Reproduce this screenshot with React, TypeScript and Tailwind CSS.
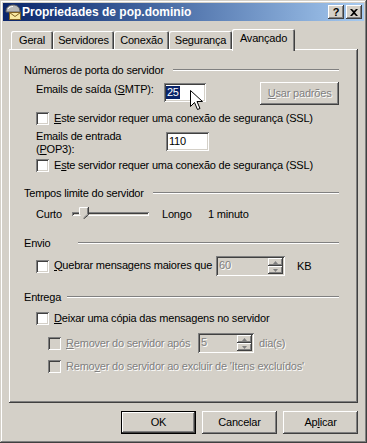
import React from 'react';

const raised =
  'shadow-[inset_-1px_-1px_0_#404040,inset_1px_1px_0_#ffffff,inset_-2px_-2px_0_#808080,inset_2px_2px_0_#d4d0c8]';
const sunken =
  'shadow-[inset_1px_1px_0_#808080,inset_-1px_-1px_0_#ffffff,inset_2px_2px_0_#404040,inset_-2px_-2px_0_#d4d0c8]';
const frame =
  'shadow-[inset_-1px_-1px_0_#404040,inset_1px_1px_0_#d4d0c8,inset_-2px_-2px_0_#808080,inset_2px_2px_0_#ffffff]';
const tabEdge = 'shadow-[inset_1px_1px_0_#ffffff,inset_-1px_0_0_#404040,inset_-2px_0_0_#808080]';
const grayed = 'text-[#808080] [text-shadow:1px_1px_0_#ffffff]';

function MailIcon() {
  return (
    <svg width="16" height="16" viewBox="0 0 16 16">
      <path d="M1 8 C1 3 4 1 8 1 C12 1 15 3 15 8 Z" fill="#b8b8b8" stroke="#606060" strokeWidth="1" />
      <path d="M3 5 C4 3 6 2.5 8 2.5" stroke="#ffffff" strokeWidth="1" fill="none" />
      <rect x="4.5" y="8.5" width="11" height="7" fill="#f8e8a0" stroke="#806020" />
      <path d="M4.5 8.5 L10 12.5 L15.5 8.5" fill="none" stroke="#806020" />
    </svg>
  );
}

function TitleBar() {
  return (
    <div className="h-[18px] flex items-center pl-[2px] pr-[2px] bg-linear-to-r from-[#0a246a] to-[#a6caf0]">
      <MailIcon />
      <span className="ml-[1px] text-white font-bold text-[12px] leading-[14px] tracking-normal whitespace-nowrap">
        Propriedades de pop.dominio
      </span>
      <div className="ml-auto flex gap-[2px]">
        <div className={`w-[16px] h-[14px] bg-[#d4d0c8] ${raised} flex items-center justify-center`}>
          <span className="font-bold text-[11px] leading-[11px] text-black">?</span>
        </div>
        <div className={`w-[16px] h-[14px] bg-[#d4d0c8] ${raised} flex items-center justify-center`}>
          <svg width="8" height="7" viewBox="0 0 8 7">
            <path d="M0 0 H2 L4 2 L6 0 H8 L5 3.5 L8 7 H6 L4 5 L2 7 H0 L3 3.5 Z" fill="#000" />
          </svg>
        </div>
      </div>
    </div>
  );
}

function Tabs() {
  const tabs = [
    { label: 'Geral', w: 'w-[42px]' },
    { label: 'Servidores', w: 'w-[61px]' },
    { label: 'Conexão', w: 'w-[55px]' },
    { label: 'Segurança', w: 'w-[63px]' },
  ];
  return (
    <div className="mt-[8px] ml-[8px] h-[20px] flex items-end">
      {tabs.map((t) => (
        <div key={t.label} className={`${t.w} h-[18px] rounded-t-[2px] ${tabEdge} flex items-center justify-center pt-[1px]`}>
          {t.label}
        </div>
      ))}
      <div className={`relative z-10 w-[63px] h-[22px] -mb-[2px] rounded-t-[2px] bg-[#d4d0c8] ${tabEdge} flex justify-center pt-[3px]`}>
        Avançado
      </div>
    </div>
  );
}

function Group({ label, w, className = '' }: { label: string; w: string; className?: string }) {
  return (
    <div className={`flex items-center h-[14px] ${className}`}>
      <span className={`${w} shrink-0 whitespace-nowrap`}>{label}</span>
      <div className="flex-1 border-t border-t-[#808080] border-b border-b-white" />
    </div>
  );
}

function Check({ disabled = false }: { disabled?: boolean }) {
  return <span className={`block w-[13px] h-[13px] shrink-0 ${sunken} ${disabled ? 'bg-[#d4d0c8]' : 'bg-white'}`} />;
}

function Arrow({ up }: { up?: boolean }) {
  return (
    <svg width="5" height="3" viewBox="0 0 5 3">
      <path d={up ? 'M2.5 0 L5 3 H0 Z' : 'M0 0 H5 L2.5 3 Z'} fill="#808080" />
    </svg>
  );
}

function Spin({ value, w }: { value: string; w: string }) {
  return (
    <div className={`${w} h-[20px] shrink-0 ${sunken} bg-[#d4d0c8] flex p-[2px]`}>
      <span className={`flex-1 pl-[1px] pt-[1px] ${grayed}`}>{value}</span>
      <div className="w-[15px] flex flex-col">
        <div className={`h-[8px] ${raised} flex items-center justify-center`}>
          <Arrow up />
        </div>
        <div className={`h-[8px] ${raised} flex items-center justify-center`}>
          <Arrow />
        </div>
      </div>
    </div>
  );
}

function SliderThumb() {
  return (
    <svg width="10" height="12" viewBox="0 0 10 12" className="absolute left-[7px] top-[-5px]">
      <path d="M0.5 0.5 H8.5 V7.5 L4.5 11.5 L0.5 7.5 Z" fill="#d4d0c8" />
      <path d="M0.5 7.5 V0.5 H8.5" fill="none" stroke="#ffffff" />
      <path d="M9.5 0 V7.8 L4.5 12" fill="none" stroke="#404040" />
      <path d="M8.5 1 V7.3 L4.5 11" fill="none" stroke="#808080" />
    </svg>
  );
}

function Button({ children, isDefault = false }: { children: React.ReactNode; isDefault?: boolean }) {
  return (
    <div className={`w-[75px] h-[23px] ${isDefault ? 'border border-black' : ''} flex`}>
      <div className={`flex-1 ${raised} flex items-center justify-center`}>{children}</div>
    </div>
  );
}

function Cursor() {
  return (
    <svg width="13" height="21" viewBox="0 0 13 21" className="absolute left-[190px] top-[90px]">
      <path d="M0.5 0.5 V16.5 L4.5 12.5 L7.5 19.5 L10 18.5 L7 11.5 H12.5 Z" fill="#ffffff" stroke="#000000" strokeLinejoin="miter" />
    </svg>
  );
}

export default function App() {
  return (
    <div
      className={`relative w-[367px] h-[443px] bg-[#d4d0c8] p-[3px] flex flex-col ${frame} font-['Liberation_Sans',Arial,sans-serif] text-[11px] leading-[13px] tracking-[-0.2px] text-black`}
    >
      <TitleBar />
      <Tabs />

      <div className={`ml-[6px] w-[349px] h-[354px] ${raised} flex flex-col pl-[15px] pr-[19px] pt-[14px] whitespace-nowrap`}>
        <Group label="Números de porta do servidor" w="w-[149px]" />

        <div className="mt-[5px] h-[23px] flex pl-[12px]">
          <div className="w-[130px] pt-[1px]">
            Emails de saída (<u>S</u>MTP):
          </div>
          <div className={`mt-[1px] w-[43px] h-[19px] ${sunken} bg-white flex items-center pl-[2px]`}>
            <span className="bg-[#0a246a] text-white px-[1px]">25</span>
          </div>
          <div className={`ml-[54px] w-[80px] h-[23px] ${raised} flex items-center justify-center ${grayed}`}>
            <span>
              <u>U</u>sar padrões
            </span>
          </div>
        </div>

        <div className="mt-[7px] h-[13px] flex items-center gap-[5px] pl-[12px]">
          <Check />
          <span>
            <u>E</u>ste servidor requer uma conexão de segurança (SSL)
          </span>
        </div>

        <div className="mt-[5px] h-[26px] flex pl-[12px]">
          <div className="w-[130px]">
            Emails de entrada
            <br />(<u>P</u>OP3):
          </div>
          <div className={`mt-[2px] w-[43px] h-[19px] ${sunken} bg-white flex items-center pl-[3px]`}>110</div>
        </div>

        <div className="mt-[3px] h-[13px] flex items-center gap-[5px] pl-[12px]">
          <Check />
          <span>
            E<u>s</u>te servidor requer uma conexão de segurança (SSL)
          </span>
        </div>

        <Group label="Tempos limite do servidor" w="w-[129px]" className="mt-[14px]" />

        <div className="mt-[4px] h-[20px] flex items-center pl-[12px]">
          <span className="w-[36px]">Curto</span>
          <div className={`relative w-[77px] h-[4px] ${sunken} bg-[#d4d0c8]`}>
            <SliderThumb />
          </div>
          <span className="ml-[13px] w-[46px]">Longo</span>
          <span>1 minuto</span>
        </div>

        <Group label="Envio" w="w-[54px]" className="mt-[12px]" />

        <div className="mt-[6px] h-[20px] flex items-center pl-[12px]">
          <Check />
          <span className="ml-[5px] w-[162px] shrink-0 -mt-[2px]">
            <u>Q</u>uebrar mensagens maiores que
          </span>
          <Spin value="60" w="w-[69px]" />
          <span className="ml-[12px]">KB</span>
        </div>

        <Group label="Entrega" w="w-[43px]" className="mt-[14px]" />

        <div className="mt-[8px] h-[13px] flex items-center gap-[5px] pl-[12px]">
          <Check />
          <span>
            <u>D</u>eixar uma cópia das mensagens no servidor
          </span>
        </div>

        <div className="mt-[8px] h-[20px] flex items-center pl-[24px]">
          <Check disabled />
          <span className={`ml-[5px] w-[132px] shrink-0 ${grayed}`}>
            <u>R</u>emover do servidor após
          </span>
          <Spin value="5" w="w-[56px]" />
          <span className={`ml-[5px] ${grayed}`}>dia(s)</span>
        </div>

        <div className="mt-[7px] h-[13px] flex items-center gap-[5px] pl-[24px]">
          <Check disabled />
          <span className={grayed}>
            Remo<u>v</u>er do servidor ao excluir de 'Itens excluídos'
          </span>
        </div>
      </div>

      <div className="mt-[8px] mr-[6px] flex justify-end gap-[6px]">
        <Button isDefault>OK</Button>
        <Button>Cancelar</Button>
        <Button>
          <span>
            Ap<u>l</u>icar
          </span>
        </Button>
      </div>

      <Cursor />
    </div>
  );
}
